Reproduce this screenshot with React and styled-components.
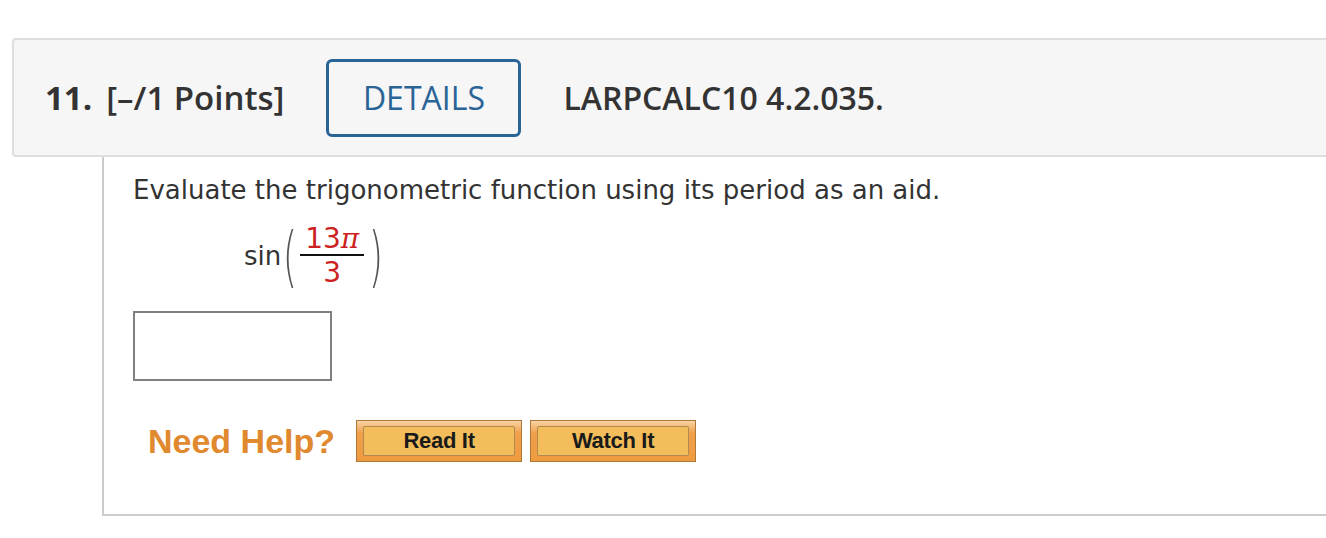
import styled, { createGlobalStyle } from 'styled-components'

const GlobalStyle = createGlobalStyle`
  html, body {
    margin: 0;
    padding: 0;
    background: #fff;
    overflow: hidden;
  }
`

const Page = styled.div`
  width: 1326px;
  height: 538px;
  padding-top: 38px;
  box-sizing: border-box;
`

const Header = styled.div`
  margin-left: 12px;
  margin-right: -20px;
  height: 119px;
  box-sizing: border-box;
  background: #f6f6f6;
  border: 2px solid #dedede;
  border-radius: 4px;
  display: flex;
  align-items: center;
  padding-left: 31px;
  font-family: 'Open Sans', sans-serif;
  color: #333;
`

const Num = styled.span`
  font-size: 33px;
  font-weight: 700;
  margin-right: 14px;
`

const Points = styled.span`
  font-size: 33px;
  font-weight: 600;
`

const DetailsButton = styled.button`
  margin-left: 42px;
  width: 195px;
  height: 78px;
  box-sizing: border-box;
  background: transparent;
  border: 3px solid #2a6496;
  border-radius: 6px;
  color: #2a6496;
  font-family: 'Open Sans', sans-serif;
  font-size: 32px;
  font-weight: 400;
  padding: 0;
`

const Code = styled.span`
  margin-left: 42px;
  font-size: 32px;
  font-weight: 600;
`

const Body = styled.div`
  margin-left: 102px;
  height: 359px;
  box-sizing: border-box;
  border-left: 2px solid #cccccc;
  border-bottom: 2px solid #cccccc;
  padding: 14px 0 0 29px;
  font-family: 'DejaVu Sans', Verdana, sans-serif;
  color: #333;
`

const Prompt = styled.p`
  margin: 0;
  font-size: 26px;
  line-height: 38px;
`

const MathRow = styled.div`
  display: flex;
  align-items: center;
  margin: 14px 0 0 111px;
  height: 66px;
  font-size: 26px;
`

const Paren = styled.span`
  display: inline-block;
  font-family: 'DejaVu Sans', sans-serif;
  font-weight: 200;
  font-size: 46px;
  color: #555;
  transform: scale(0.8, 1.45);
  line-height: 1;
  margin: 0 ${p => (p.$right ? '0' : '-1px')} 0 ${p => (p.$right ? '1px' : '0')};
`

const Fraction = styled.span`
  display: inline-flex;
  flex-direction: column;
  align-items: center;
  color: #cc2222;
  margin: 0 2px;
`

const Numerator = styled.span`
  padding: 0 5px 2px;
  border-bottom: 2px solid #111;
  line-height: 26px;
  font-size: 28px;
`

const Denominator = styled.span`
  padding-top: 3px;
  line-height: 28px;
  font-size: 28px;
`

const Pi = styled.span`
  font-family: 'DejaVu Serif', serif;
  font-style: italic;
`

const AnswerBox = styled.input`
  display: block;
  margin: 22px 0 0 0;
  width: 199px;
  height: 70px;
  box-sizing: border-box;
  border: 2px solid #808080;
  background: #fff;
`

const HelpRow = styled.div`
  display: flex;
  align-items: center;
  margin: 39px 0 0 15px;
`

const NeedHelp = styled.span`
  font-family: 'Liberation Sans', Arial, sans-serif;
  font-weight: 700;
  font-size: 34px;
  color: #e0892f;
  margin-right: 21px;
`

const HelpButton = styled.button`
  width: 166px;
  height: 42px;
  box-sizing: border-box;
  margin-right: 8px;
  padding: 5px 6px;
  border: 1px solid #b07838;
  background: linear-gradient(#f8d4a6, #f0a04a 30%, #ee9a40);
  display: flex;
  cursor: pointer;
`

const HelpButtonFace = styled.span`
  flex: 1;
  display: flex;
  align-items: center;
  justify-content: center;
  background: #f3bd5b;
  border: 1px solid #b08a50;
  border-radius: 2px;
  font-family: 'Liberation Sans', Arial, sans-serif;
  font-weight: 700;
  font-size: 22px;
  color: #1a1a1a;
  letter-spacing: -0.3px;
`

export default function App() {
  return (
    <Page>
      <GlobalStyle />
      <Header>
        <Num>11.</Num>
        <Points>[–/1 Points]</Points>
        <DetailsButton>DETAILS</DetailsButton>
        <Code>LARPCALC10 4.2.035.</Code>
      </Header>
      <Body>
        <Prompt>Evaluate the trigonometric function using its period as an aid.</Prompt>
        <MathRow>
          <span>sin</span>
          <Paren>(</Paren>
          <Fraction>
            <Numerator>13<Pi>π</Pi></Numerator>
            <Denominator>3</Denominator>
          </Fraction>
          <Paren $right>)</Paren>
        </MathRow>
        <AnswerBox type="text" />
        <HelpRow>
          <NeedHelp>Need Help?</NeedHelp>
          <HelpButton><HelpButtonFace>Read It</HelpButtonFace></HelpButton>
          <HelpButton><HelpButtonFace>Watch It</HelpButtonFace></HelpButton>
        </HelpRow>
      </Body>
    </Page>
  )
}
